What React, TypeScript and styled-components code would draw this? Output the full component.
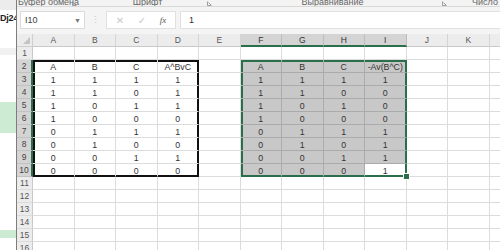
import React from "react";
import styled, { createGlobalStyle, css } from "styled-components";

const Global = createGlobalStyle`
  html, body { margin: 0; padding: 0; background: #fff; }
  body { width: 500px; height: 250px; overflow: hidden; font-family: "Liberation Sans", Arial, sans-serif; }
  #root { width: 500px; height: 250px; }
`;

const Screen = styled.div`
  display: flex;
  width: 500px;
  height: 250px;
  overflow: hidden;
`;

const BackWindow = styled.div`
  width: 16px;
  flex: none;
  display: flex;
  flex-direction: column;
  overflow: hidden;
  background: #fff;
`;

const Band = styled.div<{ $h: number; $c: string }>`
  height: ${(p) => p.$h}px;
  flex: none;
  background: ${(p) => p.$c};
`;

const BackLabel = styled.div`
  height: 38px;
  flex: none;
  padding-top: 3px;
  box-sizing: border-box;
  font-size: 9px;
  font-weight: bold;
  color: #222;
  white-space: nowrap;
  letter-spacing: -0.2px;
`;

const ExcelWindow = styled.div`
  flex: 1;
  display: flex;
  flex-direction: column;
  border-left: 1px solid #7d7d7d;
  overflow: hidden;
  min-width: 0;
`;

const Ribbon = styled.div`
  height: 6px;
  flex: none;
  display: flex;
  background: #f3f3f3;
  border-bottom: 1px solid #d9d9d9;
  overflow: hidden;
`;

const RibbonGroup = styled.div<{ $w: number }>`
  width: ${(p) => p.$w}px;
  flex: none;
  position: relative;
  display: flex;
  align-items: flex-end;
  justify-content: center;
`;

const RibbonLabel = styled.span`
  font-size: 9px;
  line-height: 9px;
  color: #666;
  margin-bottom: -1px;
  white-space: nowrap;
`;

const Launcher = styled.svg`
  position: absolute;
  right: 3px;
  bottom: 0px;
`;

const FormulaBar = styled.div`
  height: 27px;
  flex: none;
  display: flex;
  align-items: flex-start;
  padding: 4px 0 0 3px;
  box-sizing: border-box;
  background: #f4f4f4;
`;

const NameBox = styled.div`
  width: 65px;
  height: 18px;
  box-sizing: border-box;
  background: #fff;
  border: 1px solid #dadada;
  display: flex;
  align-items: center;
  justify-content: space-between;
  padding: 0 3px 0 4px;
  font-size: 9px;
  color: #444;
`;

const Caret = styled.span`
  font-size: 7px;
  color: #777;
`;

const Grip = styled.div`
  width: 21px;
  height: 18px;
  display: flex;
  align-items: center;
  justify-content: center;
  color: #c8c8c8;
  font-size: 9px;
`;

const FnBox = styled.div`
  width: 70px;
  height: 18px;
  box-sizing: border-box;
  background: #fff;
  border: 1px solid #e0e0e0;
  display: flex;
  align-items: center;
  justify-content: space-around;
  padding: 0 2px;
`;

const FnIcon = styled.span<{ $dark?: boolean }>`
  font-size: ${(p) => (p.$dark ? "9px" : "10px")};
  color: ${(p) => (p.$dark ? "#555" : "#c9c9c9")};
  font-style: ${(p) => (p.$dark ? "italic" : "normal")};
  font-family: ${(p) => (p.$dark ? '"Liberation Serif", serif' : '"DejaVu Sans", sans-serif')};
`;

const FormulaInput = styled.div`
  flex: 1;
  margin-left: 4px;
  height: 18px;
  box-sizing: border-box;
  background: #fff;
  border: 1px solid #e0e0e0;
  border-right: none;
  display: flex;
  align-items: center;
  padding-left: 8px;
  font-size: 9px;
  color: #333;
`;

const Sheet = styled.div`
  flex: 1;
  display: grid;
  grid-template-columns: 16px repeat(12, 41.5px);
  grid-auto-rows: 13px;
  background: #fff;
`;

const headerBase = css`
  box-sizing: border-box;
  background: #ececec;
  color: #555;
  font-size: 8.5px;
  display: flex;
  align-items: center;
  justify-content: center;
`;

const Corner = styled.div`
  ${headerBase};
  border-right: 1px solid #cfcfcf;
  border-bottom: 1px solid #cfcfcf;
  position: relative;
`;

const CornerTri = styled.div`
  position: absolute;
  right: 2px;
  bottom: 2px;
  width: 0;
  height: 0;
  border-left: 7px solid transparent;
  border-bottom: 7px solid #c4c4c4;
`;

const ColHeader = styled.div<{ $sel?: boolean }>`
  ${headerBase};
  border-right: 1px solid #d4d4d4;
  border-bottom: 1px solid #c9c9c9;
  ${(p) =>
    p.$sel &&
    css`
      background: #d4d4d4;
      color: #333;
      border-right-color: #bdbdbd;
      border-bottom: 2px solid #2b6e4b;
    `}
`;

const RowHeader = styled.div<{ $sel?: boolean }>`
  ${headerBase};
  border-right: 1px solid #c9c9c9;
  border-bottom: 1px solid #dcdcdc;
  ${(p) =>
    p.$sel &&
    css`
      background: #d4d4d4;
      color: #444;
      border-bottom-color: #c2c2c2;
      border-right: 2px solid #2b6e4b;
    `}
`;

type Edges = { t?: boolean; l?: boolean; r?: boolean; b?: boolean };

const edgeShadow = (e: Edges | undefined, color: string) => {
  if (!e) return [] as string[];
  const s: string[] = [];
  if (e.t) s.push(`inset 0 2px 0 ${color}`);
  if (e.l) s.push(`inset 2px 0 0 ${color}`);
  if (e.r) s.push(`inset -1px 0 0 ${color}`);
  if (e.b) s.push(`inset 0 -1px 0 ${color}`);
  return s;
};

const Cell = styled.div<{ $fill?: boolean; $box?: Edges; $selBox?: Edges }>`
  box-sizing: border-box;
  position: relative;
  border-right: 1px solid #dcdcdc;
  border-bottom: 1px solid #dcdcdc;
  background: ${(p) => (p.$fill ? "#c8c8c8" : "#fff")};
  ${(p) => p.$fill && css`border-color: #ababab;`}
  ${(p) => p.$box?.r && css`border-right-color: #111;`}
  ${(p) => p.$box?.b && css`border-bottom-color: #111;`}
  ${(p) => p.$selBox?.r && css`border-right-color: #2b6e4b;`}
  ${(p) => p.$selBox?.b && css`border-bottom-color: #2b6e4b;`}
  box-shadow: ${(p) => {
    const s = [...edgeShadow(p.$box, "#111"), ...edgeShadow(p.$selBox, "#2b6e4b")];
    return s.length ? s.join(", ") : "none";
  }};
  display: flex;
  align-items: center;
  justify-content: center;
  padding-top: 1px;
  font-size: 8.8px;
  color: #333;
  white-space: nowrap;
  overflow: visible;
`;

const FillHandle = styled.div`
  position: absolute;
  right: -4px;
  bottom: -4px;
  width: 5px;
  height: 5px;
  background: #2b6e4b;
  border: 1px solid #fff;
  z-index: 2;
`;

const COLS = ["A", "B", "C", "D", "E", "F", "G", "H", "I", "J", "K", "L"];

const left: string[][] = [
  ["A", "B", "C", "A^BvC"],
  ["1", "1", "1", "1"],
  ["1", "1", "0", "1"],
  ["1", "0", "1", "1"],
  ["1", "0", "0", "0"],
  ["0", "1", "1", "1"],
  ["0", "1", "0", "0"],
  ["0", "0", "1", "1"],
  ["0", "0", "0", "0"],
];

const right: string[][] = [
  ["A", "B", "C", "-Av(B^C)"],
  ["1", "1", "1", "1"],
  ["1", "1", "0", "0"],
  ["1", "0", "1", "0"],
  ["1", "0", "0", "0"],
  ["0", "1", "1", "1"],
  ["0", "1", "0", "1"],
  ["0", "0", "1", "1"],
  ["0", "0", "0", "1"],
];

const LauncherIcon = () => (
  <Launcher width="5" height="5" viewBox="0 0 5 5">
    <path d="M0.5 0.5 V4.5 H4.5" stroke="#888" strokeWidth="0.8" fill="none" />
    <path d="M1.5 1.5 L4 4" stroke="#888" strokeWidth="0.8" />
  </Launcher>
);

export default function App() {
  const rows = Array.from({ length: 16 }, (_, i) => i + 1);
  return (
    <>
      <Global />
      <Screen>
        <BackWindow>
          <Band $h={10} $c="#ececec" />
          <BackLabel>Dj24</BackLabel>
          <Band $h={7} $c="#f1f1f1" />
          <Band $h={47} $c="#ffffff" />
          <Band $h={31} $c="#cdebd2" />
          <Band $h={97} $c="#ffffff" />
          <Band $h={8} $c="#cdebd2" />
        </BackWindow>
        <ExcelWindow>
          <Ribbon>
            <RibbonGroup $w={63}>
              <RibbonLabel>Буфер обмена</RibbonLabel>
              <LauncherIcon />
            </RibbonGroup>
            <RibbonGroup $w={135}>
              <RibbonLabel>Шрифт</RibbonLabel>
              <LauncherIcon />
            </RibbonGroup>
            <RibbonGroup $w={235}>
              <RibbonLabel>Выравнивание</RibbonLabel>
              <LauncherIcon />
            </RibbonGroup>
            <RibbonGroup $w={70}>
              <RibbonLabel>Число</RibbonLabel>
            </RibbonGroup>
          </Ribbon>
          <FormulaBar>
            <NameBox>
              <span>I10</span>
              <Caret>▼</Caret>
            </NameBox>
            <Grip>⋮</Grip>
            <FnBox>
              <FnIcon>✕</FnIcon>
              <FnIcon>✓</FnIcon>
              <FnIcon $dark>fx</FnIcon>
            </FnBox>
            <FormulaInput>1</FormulaInput>
          </FormulaBar>
          <Sheet>
            <Corner>
              <CornerTri />
            </Corner>
            {COLS.map((c, ci) => (
              <ColHeader key={c} $sel={ci >= 5 && ci <= 8}>
                {c}
              </ColHeader>
            ))}
            {rows.map((r) => (
              <React.Fragment key={r}>
                <RowHeader $sel={r >= 2 && r <= 10}>{r}</RowHeader>
                {COLS.map((c, ci) => {
                  const inData = r >= 2 && r <= 10;
                  let text = "";
                  let box: Edges | undefined;
                  let selBox: Edges | undefined;
                  let fill = false;
                  let active = false;
                  if (inData && ci <= 3) {
                    text = left[r - 2][ci];
                    box = { t: r === 2, b: r === 10, l: ci === 0, r: ci === 3 };
                  }
                  if (inData && ci >= 5 && ci <= 8) {
                    text = right[r - 2][ci - 5];
                    active = r === 10 && ci === 8;
                    fill = !active;
                    selBox = { t: r === 2, b: r === 10, l: ci === 5, r: ci === 8 };
                  }
                  return (
                    <Cell key={c} $fill={fill} $box={box} $selBox={selBox}>
                      {text}
                      {active && <FillHandle />}
                    </Cell>
                  );
                })}
              </React.Fragment>
            ))}
          </Sheet>
        </ExcelWindow>
      </Screen>
    </>
  );
}
